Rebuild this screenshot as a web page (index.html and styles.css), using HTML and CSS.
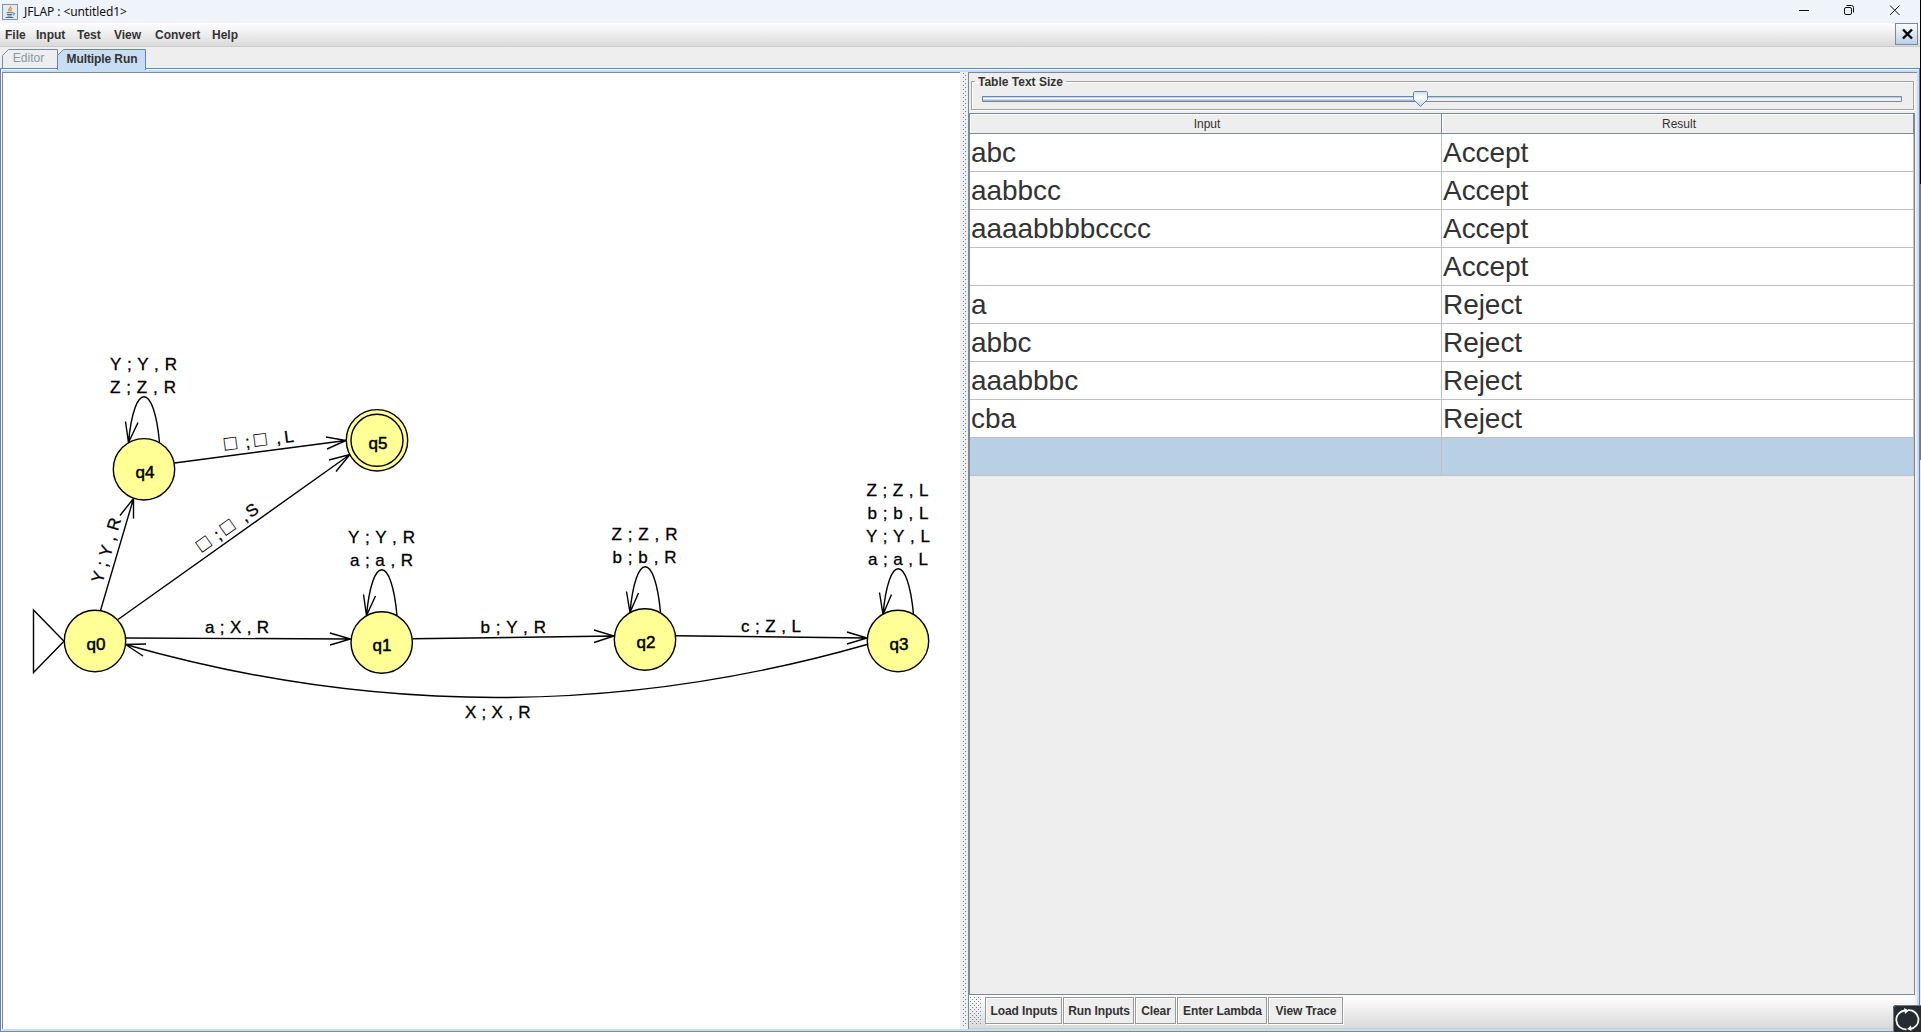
FILE: index.html
```
<!DOCTYPE html>
<html lang="en">
<head>
<meta charset="utf-8">
<title>JFLAP : &lt;untitled1&gt;</title>
<link rel="stylesheet" href="styles.css">
</head>
<body>
<div class="window">
  <header class="titlebar">
    <svg class="app-icon" width="16" height="16" viewBox="0 0 16 16">
      <rect x=".5" y=".5" width="15" height="15" fill="#e4eaf1" stroke="#8296a8"/>
      <path d="M8.600 2c1.200 1.700-3.500 2.800-1.300 5.500M10.300 4.200c-1.800 1-2 1.700-1.100 3.300" fill="none" stroke="#e58a3c" stroke-width="1.300"/>
      <path d="M4.500 8.700h6.300M5 10.500h5.300M5.500 12h4.200M3.500 13.500h8M11 9c2.300-.5 2 1.800 0 2.200" fill="none" stroke="#4c7291"/>
    </svg>
    <span class="title">JFLAP : &lt;untitled1&gt;</span>
    <svg class="controls" width="105" height="12" viewBox="0 0 105 12" fill="none" stroke="#111">
      <path d="M0 5.500h10"/>
      <rect x="45.500" y="2.500" width="7" height="7" rx="1.500"/>
      <path d="M47.500 .500h5q2 0 2 2v5"/>
      <path d="M91 .500l9.500 9.500M100.500 .500l-9.500 9.500"/>
    </svg>
  </header>
  <nav class="menubar">
    <span>File</span><span>Input</span><span>Test</span><span>View</span><span>Convert</span><span>Help</span>
    <button class="close-tab"><svg width="12" height="12" viewBox="0 0 12 12"><path d="M2 1.500l9 9M11 1.500l-9 9" stroke="#000" stroke-width="2.400"/></svg></button>
  </nav>
  <div class="tabs">
    <div class="tab tab-editor"><svg width="56" height="20" viewBox="0 0 56 20"><path d="M.5 20V6.500l6-6H55.500V20" fill="#eee" stroke="#7a8a99"/></svg><span>Editor</span></div>
    <div class="tab tab-run"><svg width="89" height="21" viewBox="0 0 89 21"><path d="M.5 21V6.500l6-6H88.500V21" fill="#c8ddf2" stroke="#6382bf"/></svg><span>Multiple Run</span></div>
  </div>
  <main class="content">
    <section class="canvas">
      <svg width="957" height="956" viewBox="3 73.500 957 956">
        <g class="edges">
          <path d="M33.500 610.500V673L64 641.700Z"/>
          <path d="M100.500 611L133.500 499M120 516L133.500 499V519"/>
          <path d="M118 620L350 455M329 460.500L350 455L336 472"/>
          <path d="M174.500 463.500L346 441M326 437.500L346 441L327 449.500"/>
          <path d="M125.500 638.500L350.500 639.500M330 633.500L350.500 639.500L330 645.500"/>
          <path d="M412.500 639.300L614 636.500M594 630.500L614 636.500L594 643"/>
          <path d="M675.500 636.300L867 638.500M847 632.500L867 638.500L847 644.500"/>
          <path d="M867 645Q497 751 125.500 645M146 644.500L125.500 645L143 656.500"/>
          <path d="M159.500 443C154 382 134 382 128.500 443M125.500 422L128.500 443L138 423"/>
          <path d="M397 616C391.500 555 372 555 366.500 616M363.500 595L366.500 616L375.500 596.500"/>
          <path d="M660.500 613C655 552 635.500 552 630 613M626.500 592L630 613L638.500 593.500"/>
          <path d="M913.500 615C908 554 888.500 554 883 615M879.500 593L883 615L891.500 595"/>
        </g>
        <g class="states">
          <circle cx="95" cy="641.500" r="30.700"/><circle cx="381.700" cy="643" r="30.700"/>
          <circle cx="645" cy="640" r="30.700"/><circle cx="898" cy="641.500" r="30.700"/>
          <circle cx="144" cy="469.800" r="30.700"/><circle cx="377" cy="440.800" r="30.700"/><circle cx="377" cy="440.800" r="26"/>
        </g>
        <g class="names">
          <text x="96" y="650">q0</text><text x="382" y="651.500">q1</text><text x="646" y="648.500">q2</text>
          <text x="899" y="650">q3</text><text x="145" y="478.500">q4</text><text x="378" y="449.500">q5</text>
        </g>
        <g class="labels">
          <text x="110" y="370" textLength="67">Y ; Y , R</text><text x="110" y="393" textLength="66">Z ; Z , R</text>
          <text x="348" y="543" textLength="67">Y ; Y , R</text><text x="350" y="566" textLength="63">a ; a , R</text>
          <text x="611.500" y="540" textLength="66">Z ; Z , R</text><text x="612.500" y="563" textLength="64">b ; b , R</text>
          <text x="866.500" y="496" textLength="62">Z ; Z , L</text><text x="867.500" y="519" textLength="61">b ; b , L</text>
          <text x="866" y="542" textLength="64">Y ; Y , L</text><text x="868" y="565" textLength="60">a ; a , L</text>
          <text x="205" y="633.500" textLength="64">a ; X , R</text><text x="480.500" y="633" textLength="65.500">b ; Y , R</text>
          <text x="741" y="632" textLength="60">c ; Z , L</text><text x="465" y="718" textLength="65.500">X ; X , R</text>
          <g transform="translate(116.800 554.500) rotate(-73.600)"><text x="-33" y="-5.500" textLength="67">Y ; Y , R</text></g>
          <g class="blanks" transform="translate(234 537.500) rotate(-35.400)"><text y="-5.500"><tspan class="box" x="-35">□</tspan><tspan x="-14.500">;</tspan><tspan class="box" x="-6">□</tspan><tspan x="17.500">,</tspan><tspan x="24.500">S</tspan></text></g>
          <g class="blanks" transform="translate(260 452.300) rotate(-7.500)"><text y="-5.500"><tspan class="box" x="-34.500">□</tspan><tspan x="-13.500">;</tspan><tspan class="box" x="-4.500">□</tspan><tspan x="17.500">,</tspan><tspan x="26">L</tspan></text></g>
        </g>
      </svg>
    </section>
    <div class="divider"></div>
    <section class="side">
      <fieldset class="size-box"><legend>Table Text Size</legend>
        <svg width="922" height="16" viewBox="0 0 922 16">
          <defs><linearGradient id="thumb" x2="0" y2="1"><stop stop-color="#c8ddf2"/><stop offset=".4" stop-color="#fff"/><stop offset="1" stop-color="#b8cfe5"/></linearGradient></defs>
          <path d="M.5 5.500h919v5H.500z" fill="#eee" stroke="#7a8a99"/><path d="M1 6.500h918" stroke="#b8cfe5"/>
          <path d="M.5 5.500h438v5H.500z" fill="#c8ddf2" stroke="#6382bf"/><path d="M1 7.500h437" stroke="#fff"/><path d="M1 9.500h437" stroke="#a3b8cc"/>
          <path d="M431.500 1.500l1-1h12l1 1v7l-7 7l-7-7z" fill="url(#thumb)" stroke="#6382bf"/>
        </svg>
      </fieldset>
      <div class="scroll">
        <table class="runs">
          <thead><tr><th>Input</th><th>Result</th></tr></thead>
          <tbody>
            <tr><td>abc</td><td>Accept</td></tr>
            <tr><td>aabbcc</td><td>Accept</td></tr>
            <tr><td>aaaabbbbcccc</td><td>Accept</td></tr>
            <tr><td></td><td>Accept</td></tr>
            <tr><td>a</td><td>Reject</td></tr>
            <tr><td>abbc</td><td>Reject</td></tr>
            <tr><td>aaabbbc</td><td>Reject</td></tr>
            <tr><td>cba</td><td>Reject</td></tr>
            <tr class="selected"><td></td><td></td></tr>
          </tbody>
        </table>
      </div>
      <div class="toolbar">
        <i class="grip"></i>
        <button class="b-load">Load Inputs</button><button class="b-run">Run Inputs</button><button class="b-clear">Clear</button><button class="b-lambda">Enter Lambda</button><button class="b-trace">View Trace</button>
      </div>
    </section>
  </main>
  <svg class="sync" width="28" height="27" viewBox="0 0 28 27">
    <path d="M0 27V3q0-3 3-3H28V27z" fill="#262b31"/><path d="M.5 27V3.500q0-3 3-3H28" fill="none" stroke="#777"/>
    <path d="M12 5.500a9.300 9.300 0 0 0 1.500 18.800M17 24a9.300 9.300 0 0 0-2-18.800" fill="none" stroke="#f4f4f4" stroke-width="1.800"/>
    <path d="M11 3l5 2.500-4 3.500zM18.500 26l-4.500-2 4-3.500z" fill="#f4f4f4"/>
  </svg>
</div>
</body>
</html>
```
FILE: styles.css
```
* { box-sizing: border-box; }
html, body { height: 1032px; overflow: hidden; }
body { margin: 0; font-family: "Liberation Sans", Arial, sans-serif; color: #333; }
.window { position: relative; width: 1921px; height: 1032px; display: flex; flex-direction: column; background: linear-gradient(#000 184px, #777 184px 460px, #e8edf3 460px); overflow: hidden; padding-right: 1px; }
.titlebar { height: 23px; display: flex; align-items: center; background: #eff3fa; padding-left: 2px; }
.title { font: 12px "Noto Sans", "Open Sans", sans-serif; letter-spacing: -.1px; color: #111; margin-left: 6px; white-space: pre; }
.controls { margin-left: auto; margin-right: 16px; margin-top: -1px; }
.menubar { height: 24px; display: grid; grid-template-columns: 31px 41px 37px 41px 57px auto 1fr; align-items: start; background: linear-gradient(#fff, #dadada); border-bottom: 1px solid #ccc; padding-left: 5px; font: bold 12px/24px "Liberation Sans", sans-serif; }
.close-tab { width: 23px; height: 22px; justify-self: end; margin-right: 2px; padding: 0; display: grid; place-items: center; border: 1px solid #7a8a99; background: linear-gradient(#fff, #b8cfe5); }
.tabs { height: 22px; display: flex; align-items: flex-end; padding-left: 2px; background: #eee; font: bold 12px/17px "Liberation Sans", sans-serif; }
.tab { display: grid; }
.tab svg, .tab span { grid-area: 1 / 1; }
.tab span { text-align: center; }
.tab-editor { height: 20px; }
.tab-editor span { font-weight: 400; line-height: 18px; color: #8498ab; padding-right: 3px; }
.tab-run { position: relative; height: 21px; margin-bottom: -1px; margin-left: -1px; }
.tab-run span { line-height: 21px; letter-spacing: -.1px; padding-left: 1px; }
.content { flex: 1; min-height: 0; display: flex; margin-top: -1px; background: #c8ddf2; padding: 3px 2px 2px 1px; border: solid #6382bf; border-width: 1px; border-bottom-color: #7a8a99; box-shadow: inset 1px 1px #fff; }
.canvas { width: 958px; background: #fff; border: solid #7a8a99; border-width: 1px 0 0 1px; overflow: hidden; }
.canvas svg { display: block; }
.edges { fill: none; stroke: #000; stroke-width: 1.400; }
.states { fill: #ffff96; stroke: #000; stroke-width: 1.400; }
.names, .labels { font: 17px "Liberation Sans", sans-serif; fill: #000; stroke: #000; stroke-width: .3; }
.names { text-anchor: middle; stroke-width: .5; }
.box { font-size: 21px; stroke: none; }
.divider { width: 8px; padding: 1px 2px 3px 3px; background: conic-gradient(from 270deg at 1px 1px, #7a8a99 90deg, transparent 0) 0 0 / 4px 4px content-box, conic-gradient(from 270deg at 1px 1px, #7a8a99 90deg, transparent 0) 2px 2px / 4px 4px content-box, #eee; }
.side { flex: 1; min-width: 0; display: flex; flex-direction: column; background: #eee; border: solid #7a8a99; border-width: 1px 0 0 1px; padding-right: 2px; }
.size-box { height: 36px; margin: 1px 1px 3px 2px; padding: 0 0 0 10px; border: 1px solid #a3a3a3; box-shadow: inset 1px 1px #fff, 1px 1px #fff; }
.size-box legend { margin-left: -7px; padding: 1px 3px 0; font: bold 12px/14px "Liberation Sans", sans-serif; }
.size-box svg { display: block; margin-top: 2px; }
.scroll { flex: 1; border: 1px solid #7a8a99; }
.runs { width: 100%; table-layout: fixed; border-collapse: separate; border-spacing: 0; }
.runs th { height: 20px; padding: 1px 0 0 3px; font: 12px/18px "Liberation Sans", sans-serif; border: solid #7a8a99; border-width: 0 1px 1px 0; box-shadow: inset 1px 1px #fff; }
.runs td { height: 38px; padding: 1px 1px 0; background: #fff; border: solid #bfbfbf; border-width: 0 1px 1px 0; font-size: 28px; line-height: 36px; letter-spacing: -.05px; }
.runs .selected td { background: #b8cfe5; }
.toolbar { height: 34px; display: flex; align-items: flex-start; gap: 1px; padding: 2px 0 0 1px; background: linear-gradient(#fff, #dadada); border-bottom: 1px solid #ccc; }
.grip { width: 11px; height: 28px; margin-right: 3px; background: conic-gradient(from 270deg at 1px 1px, #7a8a99 90deg, transparent 0) 0 0 / 4px 4px, conic-gradient(from 270deg at 1px 1px, #7a8a99 90deg, transparent 0) 2px 2px / 4px 4px; }
.toolbar button { height: 27px; padding: 1px 0 0 1px; font: bold 12px "Liberation Sans", sans-serif; letter-spacing: -.1px; color: #333; background: #eee; border: 1px solid #999; box-shadow: inset 1px 1px #fff, 1px 1px #fff; }
.b-load { width: 77px; } .b-run { width: 71px; } .b-clear { width: 41px; } .b-lambda { width: 90px; } .b-trace { width: 75px; }
.sync { position: absolute; right: 0; bottom: 0; }
```
